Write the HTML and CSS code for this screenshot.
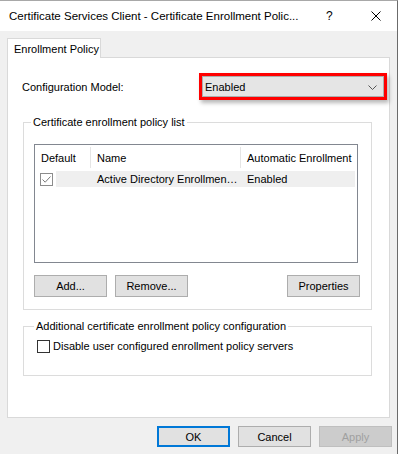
FILE: index.html
```html
<!DOCTYPE html>
<html>
<head>
<meta charset="utf-8">
<link rel="stylesheet" href="styles.css">
</head>
<body>
<div class="dialog">
  <div class="titlebar">
    <span class="title">Certificate Services Client - Certificate Enrollment Polic...</span>
    <span class="help">?</span>
    <span class="close">
      <svg width="10" height="10" viewBox="0 0 10 10"><path d="M0.5 0.5 L9.5 9.5 M9.5 0.5 L0.5 9.5" stroke="#000" stroke-width="1" fill="none"/></svg>
    </span>
  </div>
  <div class="client">
    <div class="tabs">
      <div class="tab">Enrollment Policy</div>
    </div>
    <div class="panel">
      <div class="config-row">
        <label class="config-label">Configuration Model:</label>
        <div class="highlight">
          <div class="combo">
            <span>Enabled</span>
            <svg class="chev" width="9" height="5" viewBox="0 0 9 5"><path d="M0.5 0.5 L4.5 4.5 L8.5 0.5" stroke="#555" stroke-width="1" fill="none"/></svg>
          </div>
        </div>
      </div>

      <fieldset class="group group-list">
        <legend>Certificate enrollment policy list</legend>
        <div class="listview">
          <div class="lv-header">
            <div class="col c1">Default</div>
            <div class="col c2">Name</div>
            <div class="col c3">Automatic Enrollment</div>
          </div>
          <div class="lv-row">
            <div class="cell c1"><span class="check checked">
              <svg width="11" height="11" viewBox="0 0 11 11"><path d="M1.5 5.5 L4.2 8.2 L9.5 2.5" stroke="#7a7a7a" stroke-width="1" fill="none"/></svg>
            </span></div>
            <div class="cell c2 sel">Active Directory Enrollmen…</div>
            <div class="cell c3 sel">Enabled</div>
          </div>
        </div>
        <div class="btn-row">
          <button class="btn">Add...</button>
          <button class="btn">Remove...</button>
          <button class="btn push-right">Properties</button>
        </div>
      </fieldset>

      <fieldset class="group group-extra">
        <legend>Additional certificate enrollment policy configuration</legend>
        <div class="check-row">
          <span class="check"></span>
          <span>Disable user configured enrollment policy servers</span>
        </div>
      </fieldset>
    </div>
    <div class="footer">
      <button class="btn default">OK</button>
      <button class="btn">Cancel</button>
      <button class="btn disabled">Apply</button>
    </div>
  </div>
</div>
<div class="behind"></div>
</body>
</html>
```

FILE: styles.css
```css
html, body {
  margin: 0;
  padding: 0;
  background: #ffffff;
}

body {
  display: flex;
  width: 401px;
  height: 454px;
  overflow: hidden;
  font-family: "Liberation Sans", Arial, sans-serif;
  font-size: 11px;
  color: #000;
}

.dialog {
  width: 398px;
  height: 454px;
  border-right: 1px solid #6b6b6b;
  border-top: 1px solid #a8a8a8;
  box-sizing: border-box;
  background: #f0f0f0;
  display: flex;
  flex-direction: column;
}

.behind {
  flex: 1;
  background: #ffffff;
}

/* title bar */
.titlebar {
  height: 30px;
  background: #ffffff;
  display: flex;
  align-items: center;
  padding-left: 9px;
  flex: none;
  font-size: 11.5px;
}

.title {
  width: 317px;
  white-space: nowrap;
  overflow: hidden;
}

.help {
  width: 14px;
  font-size: 12px;
}

.close {
  margin-left: 31px;
  display: flex;
}

/* client area */
.client {
  flex: 1;
  display: flex;
  flex-direction: column;
  padding: 7px 0 0 7px;
}

.tabs {
  display: flex;
  height: 19px;
  position: relative;
  z-index: 1;
}

.tab {
  width: 94px;
  height: 20px;
  box-sizing: border-box;
  border: 1px solid #d9d9d9;
  border-bottom: none;
  background: #ffffff;
  padding: 2px 0 0 6px;
  line-height: 16px;
  white-space: nowrap;
}

.panel {
  width: 383px;
  height: 361px;
  box-sizing: border-box;
  background: #ffffff;
  border: 1px solid #d9d9d9;
  padding-top: 15px;
}

/* configuration row */
.config-row {
  display: flex;
  align-items: center;
  padding-left: 14px;
}

.config-label {
  width: 177px;
  flex: none;
}

.highlight {
  width: 188px;
  height: 27px;
  box-sizing: border-box;
  border: 3px solid #ff0000;
  box-shadow: 2px 3px 4px rgba(0, 0, 0, 0.28);
  display: flex;
  align-items: stretch;
}

.combo {
  flex: 1;
  box-sizing: border-box;
  border: 1px solid #adadad;
  background: #e5e5e5;
  display: flex;
  align-items: center;
  padding: 0 6px 0 2px;
}

.combo span {
  flex: 1;
}

.chev {
  margin-top: 1px;
}

/* group boxes */
.group {
  margin: 0 0 0 15px;
  width: 349px;
  box-sizing: border-box;
  border: 1px solid #dcdcdc;
  padding: 0 0 0 10px;
  min-width: 0;
}

.group legend {
  padding: 0 2px;
  margin-left: -3px;
  line-height: 16px;
}

.group-list {
  margin-top: 14px;
  padding-top: 14px;
  padding-bottom: 12px;
}

.group-extra {
  margin-top: 8px;
  padding: 4px 0 21px 13px;
}

/* list view */
.listview {
  width: 324px;
  height: 119px;
  box-sizing: border-box;
  border: 1px solid #828790;
  background: #ffffff;
}

.lv-header {
  display: flex;
  height: 24px;
  align-items: stretch;
}

.col {
  display: flex;
  align-items: center;
  padding-left: 6px;
  box-sizing: border-box;
  border-right: 1px solid #e5e5e5;
  margin: 2px 0 1px;
  white-space: nowrap;
}

.c1 { width: 56px; }
.c2 { width: 150px; }
.c3 { width: 116px; }

.lv-header .c3 {
  border-right-color: transparent;
}

.lv-row {
  display: flex;
  height: 16px;
  margin-top: 2px;
  align-items: stretch;
}

.cell {
  display: flex;
  align-items: center;
  padding-left: 6px;
  box-sizing: border-box;
  white-space: nowrap;
}

.lv-row .c1 {
  width: 21px;
  padding-left: 5px;
}

.lv-row .c2 {
  width: 185px;
  padding-left: 41px;
}

.lv-row .c3 { width: 114px; }

.sel {
  background: #efefef;
}

.check {
  width: 13px;
  height: 13px;
  box-sizing: border-box;
  border: 1px solid #333333;
  background: #ffffff;
  display: inline-flex;
  align-items: center;
  justify-content: center;
  flex: none;
}

.check.checked {
  border-color: #8c8c8c;
}

/* buttons */
.btn-row {
  display: flex;
  gap: 8px;
  margin-top: 12px;
  width: 326px;
}

.btn {
  width: 73px;
  height: 22px;
  box-sizing: border-box;
  border: 1px solid #adadad;
  background: #e1e1e1;
  font: inherit;
  color: #000;
  padding: 0;
  margin: 0;
}

.push-right {
  margin-left: auto;
}

.check-row {
  display: flex;
  align-items: center;
  gap: 3px;
  height: 16px;
}

/* footer buttons */
.footer {
  display: flex;
  gap: 8px;
  padding: 8px 0 0 150px;
}

.footer .btn {
  height: 21px;
}

.btn.default {
  border: 2px solid #0078d7;
}

.btn.disabled {
  background: #cccccc;
  border-color: #bfbfbf;
  color: #a0a0a0;
}
```
